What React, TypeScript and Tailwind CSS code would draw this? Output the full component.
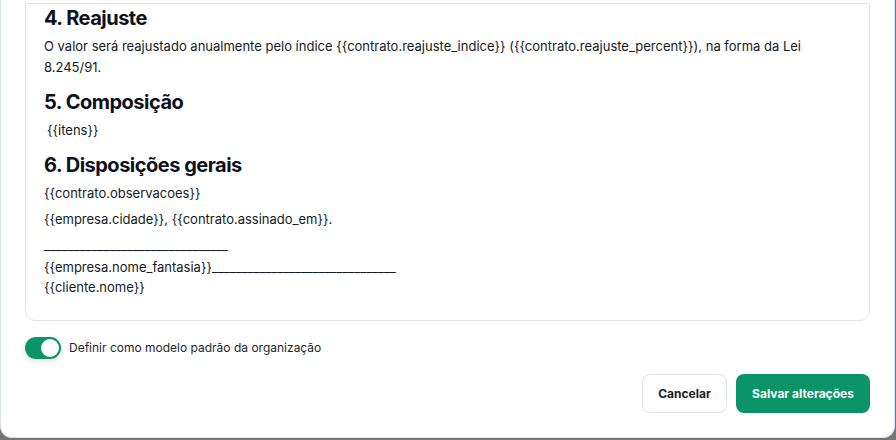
import { useState } from 'react'

const font = { fontFamily: 'Inter, "Noto Sans", sans-serif' }

function Toggle({ checked, onChange }: { checked: boolean; onChange: (v: boolean) => void }) {
  return (
    <button
      type="button"
      role="switch"
      aria-checked={checked}
      onClick={() => onChange(!checked)}
      className={`flex h-[22px] w-[36px] shrink-0 items-center rounded-full p-[2px] shadow-[0_2px_6px_rgba(0,0,0,0.12)] ${
        checked ? 'justify-end bg-[#0b9467]' : 'justify-start bg-slate-300'
      }`}
    >
      <span className="size-[18px] rounded-full bg-white" />
    </button>
  )
}

export default function App() {
  const [isDefault, setIsDefault] = useState(true)
  const line = '_______________________________'

  return (
    <div className="h-[440px] w-[896px] overflow-hidden bg-[#767676]" style={font}>
      <div className="flex h-[438px] w-[895px] flex-col justify-end overflow-hidden rounded-b-xl border-x border-b border-[#dde3ee] bg-white px-6 pb-6">
        <div className="rounded-b-[10px] border border-[#dfe4ec] pr-5 pl-[18px] pb-[23px] text-[13px] leading-[21px] text-[#141a24]">
          <h2 className="text-xl leading-7 font-bold tracking-tight text-[#0c111b]">4. Reajuste</h2>
          <p className="mt-1">
            O valor será reajustado anualmente pelo índice {'{{contrato.reajuste_indice}}'} ({'{{contrato.reajuste_percent}}'}), na forma da Lei 8.245/91.
          </p>

          <h2 className="mt-[10px] text-xl leading-7 font-bold tracking-tight text-[#0c111b]">5. Composição</h2>
          <p className="mt-1 pl-[3px]">{'{{itens}}'}</p>

          <h2 className="mt-[10px] text-xl leading-7 font-bold tracking-tight text-[#0c111b]">6. Disposições gerais</h2>
          <p className="mt-1">{'{{contrato.observacoes}}'}</p>
          <p className="mt-[5px]">{'{{empresa.cidade}}'}, {'{{contrato.assinado_em}}'}.</p>
          <p className="mt-[5px]">{line}</p>
          <p className="mt-[1px] leading-5">
            {'{{empresa.nome_fantasia}}'}
            {line}
            <br />
            {'{{cliente.nome}}'}
          </p>
        </div>

        <div className="mt-4 flex items-center gap-[8px]">
          <Toggle checked={isDefault} onChange={setIsDefault} />
          <span className="text-xs text-[#1f2530]">Definir como modelo padrão da organização</span>
        </div>

        <div className="mt-[15px] flex justify-end gap-[9px]">
          <button
            type="button"
            className="h-[39px] w-[85px] rounded-lg border border-[#dde8dd] bg-white text-xs font-bold text-[#1a1d22]"
          >
            Cancelar
          </button>
          <button
            type="button"
            className="h-[39px] w-[134px] rounded-lg bg-[#0b9467] text-xs font-bold text-white"
          >
            Salvar alterações
          </button>
        </div>
      </div>
    </div>
  )
}
